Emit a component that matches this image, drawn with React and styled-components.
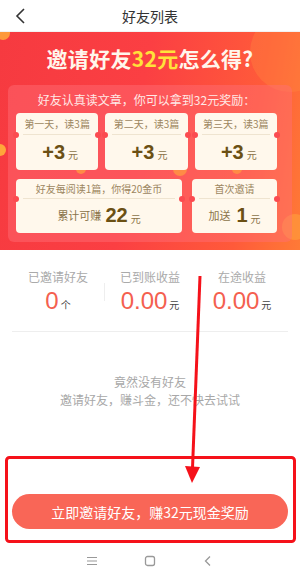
import React from "react";
import styled, { createGlobalStyle } from "styled-components";

const Global = createGlobalStyle`
  html, body { margin: 0; padding: 0; background: #fff; }
  body { font-family: "Noto Sans CJK SC", "Noto Sans", sans-serif; }
  * { box-sizing: border-box; }
`;

const Page = styled.div`
  position: relative;
  width: 300px;
  height: 576px;
  overflow: hidden;
  background: #fff;
  display: flex;
  flex-direction: column;
`;

const Header = styled.div`
  height: 32px;
  flex: none;
  display: flex;
  align-items: center;
  justify-content: center;
  position: relative;
  background: #fff;
  border-bottom: 1px solid #f2f2f2;
`;

const Back = styled.svg`
  position: absolute;
  left: 14px;
  top: 7px;
`;

const Title = styled.div`
  font-size: 14px;
  color: #333;
`;

const Banner = styled.div`
  position: relative;
  height: 218px;
  flex: none;
  background: linear-gradient(100deg, #f63a40 0%, #fb3f43 45%, #ff5a3a 80%, #ff7a36 100%);
  padding: 0 8px 8px 8px;
  display: flex;
  flex-direction: column;
  overflow: hidden;
`;

const Dot = styled.div`
  position: absolute;
  border-radius: 50%;
  background: ${(p) => p.c || "#ffa21e"};
  opacity: ${(p) => p.o || 1};
`;

const BigTitle = styled.div`
  position: relative;
  height: 53px;
  display: flex;
  align-items: center;
  justify-content: center;
  padding-bottom: 2px;
  font-size: 21px;
  font-weight: 700;
  color: #fff6ec;
  letter-spacing: 0.3px;
  span { color: #ffe23a; }
`;

const Panel = styled.div`
  position: relative;
  flex: 1;
  border-radius: 6px;
  background: rgba(255, 110, 120, 0.45);
  padding: 0 15px 9px 8px;
  display: flex;
  flex-direction: column;
`;

const Sub = styled.div`
  height: 28px;
  display: flex;
  align-items: center;
  justify-content: center;
  font-size: 12px;
  color: #ffe9e6;
  padding-right: 0;
`;

const Row = styled.div`
  display: grid;
  grid-template-columns: ${(p) => p.cols};
  gap: ${(p) => p.gap}px;
  height: ${(p) => p.h}px;
  margin-bottom: ${(p) => p.mb || 0}px;
`;

const Card = styled.div`
  position: relative;
  background: #fff8ec;
  border-radius: 4px;
  display: flex;
  flex-direction: column;
  &::before, &::after {
    content: "";
    position: absolute;
    top: ${(p) => p.notch}px;
    width: 6px;
    height: 6px;
    border-radius: 50%;
    background: #fb4b50;
  }
  &::before { left: -3px; }
  &::after { right: -3px; }
`;

const CardTop = styled.div`
  height: ${(p) => p.h}px;
  display: flex;
  align-items: center;
  justify-content: center;
  font-size: 10px;
  color: #9c8660;
  margin: 0 7px;
  border-bottom: 1px solid #efe4d0;
`;

const CardBottom = styled.div`
  flex: 1;
  display: flex;
  align-items: center;
  justify-content: center;
  color: #8a7348;
  font-size: 11px;
  padding-bottom: 2px;
`;

const Big = styled.b`
  font-family: "Liberation Sans", Arial, sans-serif;
  font-size: ${(p) => p.s || 20}px;
  font-weight: 700;
  color: #6b5014;
  margin: 0 3px 0 ${(p) => p.ml || 0}px;
  line-height: 1;
`;

const Unit = styled.span`
  font-size: 10px;
  color: #8a7348;
  margin-top: 6px;
`;

const Stats = styled.div`
  flex: none;
  height: 82px;
  margin: 0 12px;
  padding-top: 19px;
  border-bottom: 1px solid #eeeeee;
  display: grid;
  grid-template-columns: 1fr 1fr 1fr;
`;

const Stat = styled.div`
  display: flex;
  flex-direction: column;
  align-items: center;
  position: relative;
  ${(p) => p.div && `
    &::before {
      content: "";
      position: absolute;
      left: 0;
      top: 14px;
      height: 18px;
      width: 1px;
      background: #eeeeee;
    }
  `}
`;

const StatLabel = styled.div`
  font-size: 12px;
  color: #aaaaaa;
  line-height: 16px;
`;

const StatValue = styled.div`
  display: flex;
  align-items: baseline;
  margin-top: 2px;
  b {
    font-family: "Liberation Sans", Arial, sans-serif;
    font-size: 24px;
    font-weight: 400;
    color: #f4604f;
    line-height: 28px;
  }
  span {
    font-size: 10px;
    color: #444;
    margin-left: 2px;
  }
`;

const Empty = styled.div`
  flex: none;
  padding-top: 41px;
  height: 162px;
  text-align: center;
  font-size: 12px;
  line-height: 18px;
  color: #a8a8a8;
`;

const Button = styled.div`
  flex: none;
  margin: 0 12px;
  height: 35px;
  border-radius: 18px;
  background: #f96657;
  color: #fff;
  font-size: 14px;
  display: flex;
  align-items: center;
  justify-content: center;
`;

const Nav = styled.div`
  flex: none;
  margin-top: 13px;
  height: 36px;
  display: flex;
  align-items: center;
  justify-content: center;
  gap: 46px;
  padding-top: 2px;
`;

const Overlay = styled.svg`
  position: absolute;
  left: 0;
  top: 0;
  pointer-events: none;
`;

function Coupon({ label, children, notch, topH }) {
  return (
    <Card notch={notch}>
      <CardTop h={topH}>{label}</CardTop>
      <CardBottom>{children}</CardBottom>
    </Card>
  );
}

export default function App() {
  return (
    <Page>
      <Global />
      <Header>
        <Back width="14" height="18" viewBox="0 0 14 18">
          <path d="M10 2 L3 9 L10 16" fill="none" stroke="#333" strokeWidth="1.6" />
        </Back>
        <Title>好友列表</Title>
      </Header>
      <Banner>
        <Dot style={{ left: -4, top: -6, width: 14, height: 14 }} c="#ffb23a" o={0.8} />
        <Dot style={{ right: -30, top: -20, width: 80, height: 80 }} c="#ff8a40" o={0.35} />
        <Dot style={{ left: -6, top: 112, width: 12, height: 12 }} c="#ffb23a" o={0.9} />
        <Dot style={{ left: 76, top: 132, width: 10, height: 10 }} />
        <Dot style={{ left: 173, top: 130, width: 14, height: 14 }} />
        <Dot style={{ left: 232, top: 132, width: 10, height: 10 }} />
        <Dot style={{ right: -8, top: 182, width: 26, height: 26 }} c="#ff9a3a" o={0.7} />
        <BigTitle>
          <div>
            邀请好友<span>32元</span>怎么得?
          </div>
        </BigTitle>
        <Panel>
          <Sub>好友认真读文章，你可以拿到32元奖励：</Sub>
          <Row cols="1fr 1fr 1fr" gap={7} h={57} mb={9}>
            <Coupon label="第一天，读3篇" notch={19} topH={22}>
              <Big ml={6}>+3</Big>
              <Unit>元</Unit>
            </Coupon>
            <Coupon label="第二天，读3篇" notch={19} topH={22}>
              <Big ml={6}>+3</Big>
              <Unit>元</Unit>
            </Coupon>
            <Coupon label="第三天，读3篇" notch={19} topH={22}>
              <Big ml={6}>+3</Big>
              <Unit>元</Unit>
            </Coupon>
          </Row>
          <Row cols="166px 1fr" gap={10} h={54}>
            <Coupon label="好友每阅读1篇，你得20金币" notch={17} topH={20}>
              累计可赚<Big ml={4}>22</Big>
              <Unit>元</Unit>
            </Coupon>
            <Coupon label="首次邀请" notch={17} topH={20}>
              加送<Big ml={6}>1</Big>
              <Unit>元</Unit>
            </Coupon>
          </Row>
        </Panel>
      </Banner>
      <Stats>
        <Stat>
          <StatLabel>已邀请好友</StatLabel>
          <StatValue>
            <b>0</b>
            <span>个</span>
          </StatValue>
        </Stat>
        <Stat div>
          <StatLabel>已到账收益</StatLabel>
          <StatValue>
            <b>0.00</b>
            <span>元</span>
          </StatValue>
        </Stat>
        <Stat>
          <StatLabel>在途收益</StatLabel>
          <StatValue>
            <b>0.00</b>
            <span>元</span>
          </StatValue>
        </Stat>
      </Stats>
      <Empty>
        竟然没有好友
        <br />
        邀请好友，赚斗金，还不快去试试
      </Empty>
      <Button>立即邀请好友，赚32元现金奖励</Button>
      <Nav>
        <svg width="12" height="12" viewBox="0 0 12 12">
          <path d="M1 2.5H11M1 6H11M1 9.5H11" stroke="#999" strokeWidth="1.2" />
        </svg>
        <svg width="12" height="12" viewBox="0 0 12 12">
          <rect x="1.5" y="1.5" width="9" height="9" rx="2" fill="none" stroke="#999" strokeWidth="1.3" />
        </svg>
        <svg width="12" height="12" viewBox="0 0 12 12">
          <path d="M8 1.5 L3.5 6 L8 10.5" fill="none" stroke="#999" strokeWidth="1.3" />
        </svg>
      </Nav>
      <Overlay width="300" height="576" viewBox="0 0 300 576">
        <rect x="6.5" y="457.5" width="288" height="84" rx="3" fill="none" stroke="#f5111a" strokeWidth="3" />
        <path d="M200 276 L192.5 468" stroke="#f5111a" strokeWidth="3" fill="none" />
        <polygon points="185,466 200,467 192,483" fill="#f5111a" />
      </Overlay>
    </Page>
  );
}
